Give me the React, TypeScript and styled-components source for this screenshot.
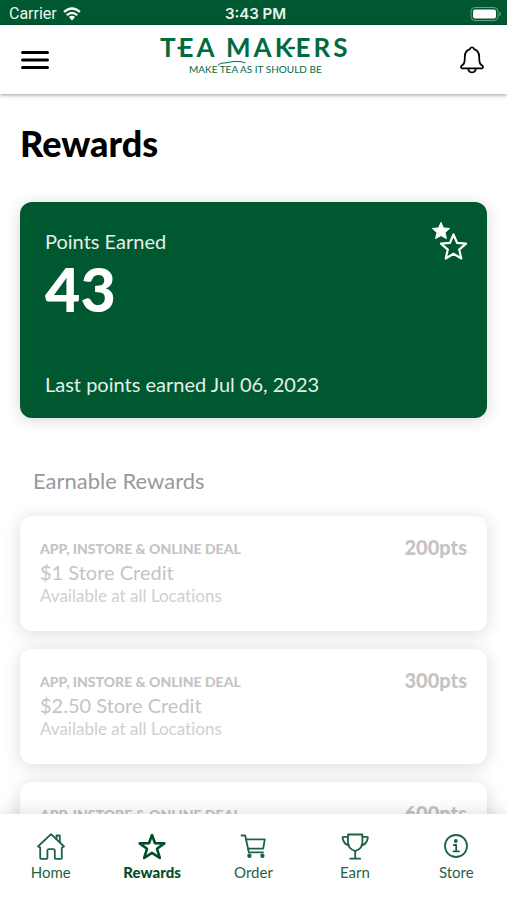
import React from "react";
import styled, { createGlobalStyle, css } from "styled-components";

const green = "#005831";
const sans = `Lato, "Open Sans", sans-serif`;

const GlobalStyle = createGlobalStyle`
  *, *::before, *::after { box-sizing: border-box; }
  body { margin: 0; background: #fff; font-family: ${sans}; font-variant-ligatures: none; color: #000; }
  h1, h2, h3, p, ul { margin: 0; padding: 0; }
  ul { list-style: none; }
  button { border: 0; padding: 0; background: none; color: inherit; font: inherit; cursor: pointer; }
  svg { display: block; flex: none; }
`;

const Screen = styled.div`
  display: flex;
  flex-direction: column;
  height: 100vh;
  overflow: hidden;
`;

const StatusBar = styled.div`
  display: grid;
  grid-template-columns: 1fr auto 1fr;
  align-items: center;
  flex: none;
  height: 25px;
  padding: 2px 5px 0 9px;
  background: ${green};
  color: #e9f4ee;
  font: 400 15px/20px Inter, Roboto, sans-serif;
`;

const Carrier = styled.div`
  display: flex;
  align-items: center;
  gap: 6px;
  font-family: Roboto, sans-serif;
  font-size: 16px;
`;

const Clock = styled.time`
  font-weight: 600;
  font-size: 15px;
`;

const BatteryIcon = styled.svg`
  justify-self: end;
`;

const Header = styled.header`
  position: relative;
  z-index: 1;
  display: grid;
  grid-template-columns: 1fr auto 1fr;
  align-items: center;
  flex: none;
  height: 69px;
  padding: 0 20px;
  background: #fff;
  box-shadow: 0 1px 4px rgba(0, 0, 0, 0.4);
`;

const IconButton = styled.button<{ $end?: boolean }>`
  display: grid;
  place-items: center;
  width: 30px;
  height: 30px;
  justify-self: ${(p) => (p.$end ? "end" : "start")};
`;

const Logo = styled.a`
  display: block;
  height: 60px;
`;

const LogoName = styled.text`
  font: 700 26px ${sans};
  letter-spacing: 3px;
  fill: #006b3f;
`;

const LogoLine = styled.text`
  font: 400 10px ${sans};
  fill: #006b3f;
`;

const Content = styled.main`
  flex: 1;
  min-height: 0;
  padding: 27px 20px 20px;
  overflow-y: auto;
  scrollbar-width: none;
`;

const Title = styled.h1`
  font-size: 36px;
  font-weight: 900;
  line-height: 44px;
`;

const PointsCard = styled.section`
  display: flex;
  justify-content: space-between;
  align-items: flex-start;
  height: 216px;
  margin-top: 37px;
  padding: 19px 19px 20px 25px;
  border-radius: 12px;
  background: ${green};
  color: #fff;
  box-shadow: 0 2px 16px rgba(0, 0, 0, 0.16);
`;

const PointsText = styled.div`
  display: flex;
  flex-direction: column;
  height: 100%;
  padding-top: 6px;
`;

const CardLabel = styled.p`
  font-size: 20px;
  line-height: 28px;
  color: #e3f0e9;

  &:last-child {
    margin-top: auto;
  }
`;

const PointsValue = styled.p`
  font-size: 61px;
  font-weight: 900;
  line-height: 68px;
`;

const SectionTitle = styled.h2`
  margin: 48px 0 20px 13px;
  color: #999;
  font-size: 22px;
  font-weight: 400;
  line-height: 30px;
`;

const RewardList = styled.ul`
  display: grid;
  gap: 18px;
`;

const RewardCard = styled.li`
  display: flex;
  justify-content: space-between;
  align-items: flex-start;
  height: 115px;
  padding: 20px;
  border-radius: 12px;
  background: #fff;
  color: #c4c4c4;
  box-shadow: 0 2px 18px rgba(0, 0, 0, 0.15);
`;

const RewardKind = styled.p`
  padding-top: 3px;
  font-size: 14px;
  font-weight: 900;
  line-height: 20px;
`;

const RewardName = styled.h3`
  font-size: 20px;
  font-weight: 400;
  line-height: 26px;
`;

const RewardPlace = styled.p`
  color: #cfcfcf;
  font-size: 17px;
  line-height: 22px;
`;

const RewardCost = styled.strong`
  font-size: 20px;
  font-weight: 900;
  line-height: 22px;
`;

const TabBar = styled.nav`
  position: relative;
  z-index: 1;
  display: grid;
  grid-template-columns: repeat(5, 1fr);
  flex: none;
  height: 86px;
  padding-top: 17px;
  background: #fff;
  box-shadow: 0 -2px 16px rgba(0, 0, 0, 0.12);
`;

const Tab = styled.a<{ $active?: boolean }>`
  display: flex;
  flex-direction: column;
  align-items: center;
  gap: 1px;
  color: #1f6344;
  font-size: 15px;
  line-height: 20px;
  text-decoration: none;

  ${(p) =>
    p.$active &&
    css`
      color: #004d2a;
      font-weight: 900;
    `}
`;

const Line = ({ children, width = 2 }: { children: React.ReactNode; width?: number }) => (
  <svg
    width="30"
    height="30"
    viewBox="0 0 30 30"
    fill="none"
    stroke="currentColor"
    strokeWidth={width}
    strokeLinecap="round"
    strokeLinejoin="round"
    aria-hidden="true"
  >
    {children}
  </svg>
);

const HomeIcon = () => (
  <Line width={1.8}>
    <path d="M2 15.5 L15 3.2 L28 15.5 L25.8 16.8 V27 Q25.8 27.8 25 27.8 H19.6 Q18.8 27.8 18.8 27 V19.8 Q18.8 18.2 17.2 18.2 H13 Q11.4 18.2 11.4 19.8 V27 Q11.4 27.8 10.6 27.8 H5 Q4.2 27.8 4.2 27 V16.6 Z" />
    <path d="M20.5 8.2 V4.5 H23.8 V11.2" />
  </Line>
);

const StarIcon = () => (
  <Line width={2.6}>
    <path d="M15 4 L18 12.2 L27.3 12.4 L20 17.8 L22.8 27 L15 21.8 L7.2 27 L10 17.8 L2.7 12.4 L12 12.2 Z" />
  </Line>
);

const CartIcon = () => (
  <Line width={1.8}>
    <path d="M3.5 4.5 H7.2 L10.8 21.3 H25" />
    <path d="M8.2 8.4 H26.8 L25.2 17.6 H10.2" />
    <circle cx="11.4" cy="24.8" r="1.3" fill="currentColor" />
    <circle cx="24.4" cy="24.8" r="1.3" fill="currentColor" />
  </Line>
);

const TrophyIcon = () => (
  <Line width={1.8}>
    <path d="M8 3.5 H22.4 V12 Q22.4 17.5 15.2 20.2 Q8 17.5 8 12 Z" />
    <path d="M8 5.8 H3.5 Q2.4 5.8 2.6 7 Q3.6 13.5 9 14.2 M22.4 5.8 H26.9 Q28 5.8 27.8 7 Q26.8 13.5 21.4 14.2" />
    <path d="M15.2 20.5 V27.2 M10.2 27.7 H20.2" />
  </Line>
);

const InfoIcon = () => (
  <Line width={1.8}>
    <circle cx="15" cy="15" r="11" />
    <circle cx="14.8" cy="10" r="1" fill="currentColor" />
    <path d="M12.8 14 H15.2 V20 M12.4 20.3 H18" />
  </Line>
);

const BellIcon = () => (
  <svg
    width="26"
    height="28"
    viewBox="0 0 26 28"
    fill="none"
    stroke="currentColor"
    strokeWidth="1.8"
    strokeLinejoin="round"
    aria-hidden="true"
  >
    <path d="M13 1.4 Q11.2 1.4 10.8 3.2 Q6 5 5.8 10.5 Q5.9 16 4.6 18 L2.2 20.2 Q1.6 22.3 3 22.3 H23 Q24.4 22.3 23.8 20.2 L21.4 18 Q20.1 16 20.2 10.5 Q20 5 15.2 3.2 Q14.8 1.4 13 1.4 Z" />
    <path d="M9.2 22.5 Q9.6 26.4 13 26.4 Q16.4 26.4 16.8 22.5" />
  </svg>
);

const MenuIcon = () => (
  <Line width={3}>
    <path d="M2.5 7.5 H27.5 M2.5 15 H27.5 M2.5 22.5 H27.5" />
  </Line>
);

const WifiIcon = () => (
  <svg width="18" height="14" viewBox="0 0 18 14" fill="none" stroke="#fff" strokeWidth="2.2" aria-hidden="true">
    <path d="M1 5 Q9 -2 17 5" />
    <path d="M3.8 8.1 Q9 3.7 14.2 8.1" />
    <path d="M9 13.5 L5.9 10.1 Q9 7.6 12.1 10.1 Z" fill="#fff" stroke="none" />
  </svg>
);

const TwoStars = () => (
  <svg width="38" height="42" viewBox="0 0 38 42" aria-hidden="true">
    <path
      fill="#fff"
      stroke="#fff"
      strokeLinejoin="round"
      d="M11 1.4 L13.5 7 L19.6 7.4 L15 11.6 L16.4 17.6 L11 14.6 L5.6 17.6 L7 11.6 L2.4 7.4 L8.5 7 Z"
    />
    <path
      fill={green}
      stroke={green}
      strokeWidth="5"
      d="M23.5 13.5 L27 21.8 L36 22.6 L29.2 28.6 L31.3 37.5 L23.5 32.8 L15.7 37.5 L17.8 28.6 L11 22.6 L20 21.8 Z"
    />
    <path
      fill="none"
      stroke="#fff"
      strokeWidth="2.2"
      strokeLinejoin="round"
      d="M23.5 13.5 L27 21.8 L36 22.6 L29.2 28.6 L31.3 37.5 L23.5 32.8 L15.7 37.5 L17.8 28.6 L11 22.6 L20 21.8 Z"
    />
  </svg>
);

const rewards = [
  { name: "$1 Store Credit", cost: 200 },
  { name: "$2.50 Store Credit", cost: 300 },
  { name: "$5 Store Credit", cost: 600 },
];

const tabs = [
  { label: "Home", Icon: HomeIcon },
  { label: "Rewards", Icon: StarIcon },
  { label: "Order", Icon: CartIcon },
  { label: "Earn", Icon: TrophyIcon },
  { label: "Store", Icon: InfoIcon },
];

export default function App() {
  return (
    <>
      <GlobalStyle />
      <Screen>
        <StatusBar>
          <Carrier>
            Carrier
            <WifiIcon />
          </Carrier>
          <Clock>3:43 PM</Clock>
          <BatteryIcon width="32" height="14" viewBox="0 0 32 14" aria-hidden="true">
            <rect x="1" y="0.5" width="27" height="13" rx="4" fill="none" stroke="#6fa086" />
            <rect x="3" y="2.5" width="23" height="9" rx="2" fill="#fff" />
            <path d="M29.5 4.5 Q32.5 7 29.5 9.5 Z" fill="#6fa086" />
          </BatteryIcon>
        </StatusBar>

        <Header>
          <IconButton type="button" aria-label="Menu">
            <MenuIcon />
          </IconButton>
          <Logo href="#home" aria-label="Tea Makers">
            <svg width="192" height="60" viewBox="0 0 192 60">
              <LogoName x="2" y="27">TEA MAKERS</LogoName>
              <LogoLine x="31" y="43">MAKE TEA AS IT SHOULD BE</LogoLine>
              <g fill="none" stroke="#006b3f" strokeLinecap="round">
                <path d="M60 35 Q62 32.5 68 32.8 Q80 30 87 32.8" />
                <path strokeWidth="2.4" d="M20.5 18 H25 M131.5 18 H136" />
              </g>
            </svg>
          </Logo>
          <IconButton type="button" aria-label="Notifications" $end>
            <BellIcon />
          </IconButton>
        </Header>

        <Content>
          <Title>Rewards</Title>
          <PointsCard>
            <PointsText>
              <CardLabel>Points Earned</CardLabel>
              <PointsValue>43</PointsValue>
              <CardLabel>Last points earned Jul 06, 2023</CardLabel>
            </PointsText>
            <TwoStars />
          </PointsCard>

          <SectionTitle>Earnable Rewards</SectionTitle>
          <RewardList>
            {rewards.map((r) => (
              <RewardCard key={r.cost}>
                <div>
                  <RewardKind>APP, INSTORE &amp; ONLINE DEAL</RewardKind>
                  <RewardName>{r.name}</RewardName>
                  <RewardPlace>Available at all Locations</RewardPlace>
                </div>
                <RewardCost>{r.cost}pts</RewardCost>
              </RewardCard>
            ))}
          </RewardList>
        </Content>

        <TabBar aria-label="Main">
          {tabs.map(({ label, Icon }) => {
            const active = label === "Rewards";
            return (
              <Tab
                key={label}
                href={`#${label.toLowerCase()}`}
                $active={active}
                aria-current={active ? "page" : undefined}
              >
                <Icon />
                {label}
              </Tab>
            );
          })}
        </TabBar>
      </Screen>
    </>
  );
}
